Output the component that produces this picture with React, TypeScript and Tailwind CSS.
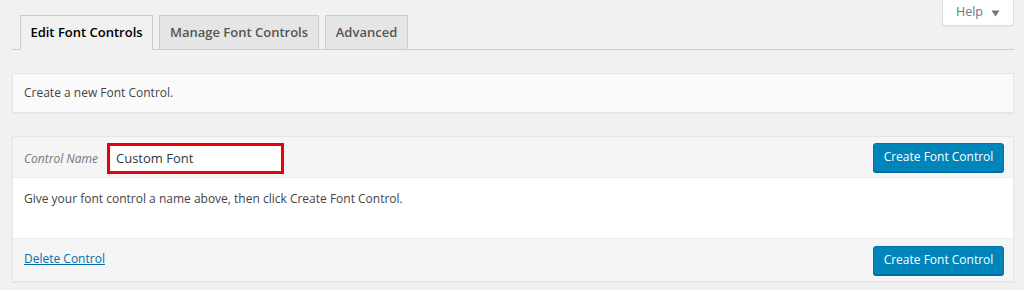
import React from "react";

export default function App() {
  const font = { fontFamily: '"Open Sans", "Noto Sans", sans-serif' };
  return (
    <div
      className="relative h-[290px] w-[1024px] overflow-hidden bg-[#f1f1f1] text-[12px] text-[#444]"
      style={font}
    >
      {/* Help tab */}
      <div className="absolute right-[10px] top-0 flex h-[26px] w-[72px] items-center justify-center gap-[8px] rounded-b-[4px] border border-t-0 border-[#ddd] bg-white text-[12.5px] text-[#72777c] shadow-[0_1px_1px_rgba(0,0,0,0.04)]">
        <span>Help</span>
        <svg width="9" height="7" viewBox="0 0 9 7" className="mt-[1px]">
          <path d="M0.5 0.5 L8.5 0.5 L4.5 6.5 Z" fill="#72777c" />
        </svg>
      </div>

      <div className="ml-[12px] mr-[10px]">
        {/* Tabs */}
        <div className="flex gap-[6px] border-b border-[#ccc] pl-[8px] pt-[15px]">
          <div className="-mb-px flex h-[35px] w-[133px] items-center justify-center border border-[#ccc] border-b-[#f1f1f1] bg-[#f1f1f1] text-[13px] font-semibold text-[#000]">
            Edit Font Controls
          </div>
          <div className="flex h-[34px] w-[160px] items-center justify-center border border-b-0 border-[#ccc] bg-[#e5e5e5] text-[13px] font-semibold text-[#555]">
            Manage Font Controls
          </div>
          <div className="flex h-[34px] w-[83px] items-center justify-center border border-b-0 border-[#ccc] bg-[#e5e5e5] text-[13px] font-semibold text-[#555]">
            Advanced
          </div>
        </div>

        {/* Notice */}
        <div className="mt-[23px] flex h-[40px] items-center border border-[#e5e5e5] bg-[#fafafa] px-[11px] shadow-[0_1px_1px_rgba(0,0,0,0.04)]">
          Create a new Font Control.
        </div>

        {/* Panel */}
        <div className="mt-[23px] border border-[#e5e5e5] bg-white shadow-[0_1px_1px_rgba(0,0,0,0.04)]">
          <div className="flex h-[41px] items-center justify-between border-b border-[#eee] bg-[#f5f5f5] pl-[11px] pr-[9px]">
            <div className="flex items-center">
              <span className="mt-[3px] italic text-[#72777c]">Control Name</span>
              <div className="ml-[9px] mt-[3px] flex h-[31px] w-[177px] items-center border-[3px] border-[#e8000b] bg-white pl-[6px] text-[13px] text-[#32373c]">
                Custom Font
              </div>
            </div>
            <button className="flex h-[29px] w-[131px] items-center justify-center rounded-[3px] border border-[#0073aa] bg-[#0085ba] text-[12px] text-white shadow-[0_1px_0_#006799]">
              Create Font Control
            </button>
          </div>
          <div className="h-[60px] px-[11px] pt-[11px] leading-[20px]">
            Give your font control a name above, then click Create Font Control.
          </div>
          <div className="flex h-[43px] items-center justify-between border-t border-[#eee] bg-[#f5f5f5] pl-[11px] pr-[9px]">
            <a className="-mt-[3px] text-[#0073aa] underline">Delete Control</a>
            <button className="flex h-[29px] w-[131px] items-center justify-center rounded-[3px] border border-[#0073aa] bg-[#0085ba] text-[12px] text-white shadow-[0_1px_0_#006799]">
              Create Font Control
            </button>
          </div>
        </div>
      </div>
    </div>
  );
}
